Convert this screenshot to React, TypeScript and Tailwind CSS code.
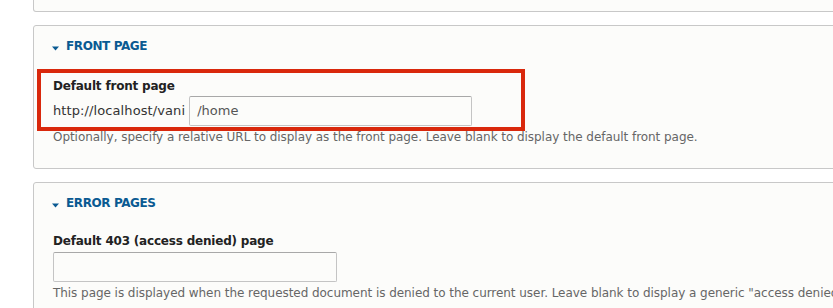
import React from "react";

const font = { fontFamily: '"DejaVu Sans", "Liberation Sans", sans-serif' };

function Caret() {
  return (
    <svg width="7" height="5" viewBox="0 0 7 5" className="mt-[5px] shrink-0">
      <polygon points="0,0.5 7,0.5 3.5,4.5" fill="#0a5a92" />
    </svg>
  );
}

function Heading({ children }: { children: React.ReactNode }) {
  return (
    <div className="flex items-center gap-[7px] pl-[18px] h-[18px]">
      <Caret />
      <span className="text-[12px] leading-[18px] font-bold uppercase tracking-[-0.4px] text-[#0a5a92]">
        {children}
      </span>
    </div>
  );
}

function TextInput({ value, className }: { value?: string; className: string }) {
  return (
    <div
      className={`h-[30px] rounded-[2px] border border-[#c4c4c4] border-t-[#a8a8a8] bg-[#fcfcfa] px-[7px] flex items-center text-[13px] text-[#555] ${className}`}
    >
      {value}
    </div>
  );
}

export default function App() {
  return (
    <div className="relative w-[833px] h-[308px] overflow-hidden bg-white text-[#222]" style={font}>
      {/* previous section, only its bottom edge shows */}
      <div className="ml-[33px] w-[820px] h-[12px] border-x border-b border-[#c8c8c8] rounded-bl-[3px] bg-[#fcfcfa]" />

      {/* front page */}
      <div className="mt-[13px] ml-[33px] w-[820px] border border-[#c8c8c8] rounded-l-[3px] bg-[#fcfcfa] pt-[11px] pb-[23px]">
        <Heading>Front page</Heading>
        <div className="pl-[19px]">
          <div className="mt-[22px] text-[12px] leading-[18px] font-bold tracking-[-0.2px]">Default front page</div>
          <div className="mt-[1px] flex items-center gap-[4px]">
            <span className="text-[13px] text-[#333] tracking-[0.1px]">http://localhost/vani</span>
            <TextInput value="/home" className="w-[283px]" />
          </div>
          <div className="mt-[3px] text-[12px] leading-[16px] text-[#666] tracking-[-0.05px] whitespace-nowrap">
            Optionally, specify a relative URL to display as the front page. Leave blank to display the default front page.
          </div>
        </div>
      </div>

      {/* error pages */}
      <div className="mt-[13px] ml-[33px] w-[820px] border border-[#c8c8c8] rounded-l-[3px] bg-[#fcfcfa] pt-[11px] pb-[24px]">
        <Heading>Error pages</Heading>
        <div className="pl-[19px]">
          <div className="mt-[20px] text-[12px] leading-[18px] font-bold tracking-[-0.2px]">
            Default 403 (access denied) page
          </div>
          <TextInput className="mt-[2px] w-[284px]" />
          <div className="mt-[3px] text-[12px] leading-[16px] text-[#666] tracking-[-0.05px] whitespace-nowrap">
            This page is displayed when the requested document is denied to the current user. Leave blank to display a generic "access denied" page.
          </div>
        </div>
      </div>

      {/* annotation box */}
      <div className="absolute left-[37px] top-[69px] w-[488px] h-[62px] border-4 border-[#d9280c]" />
    </div>
  );
}
